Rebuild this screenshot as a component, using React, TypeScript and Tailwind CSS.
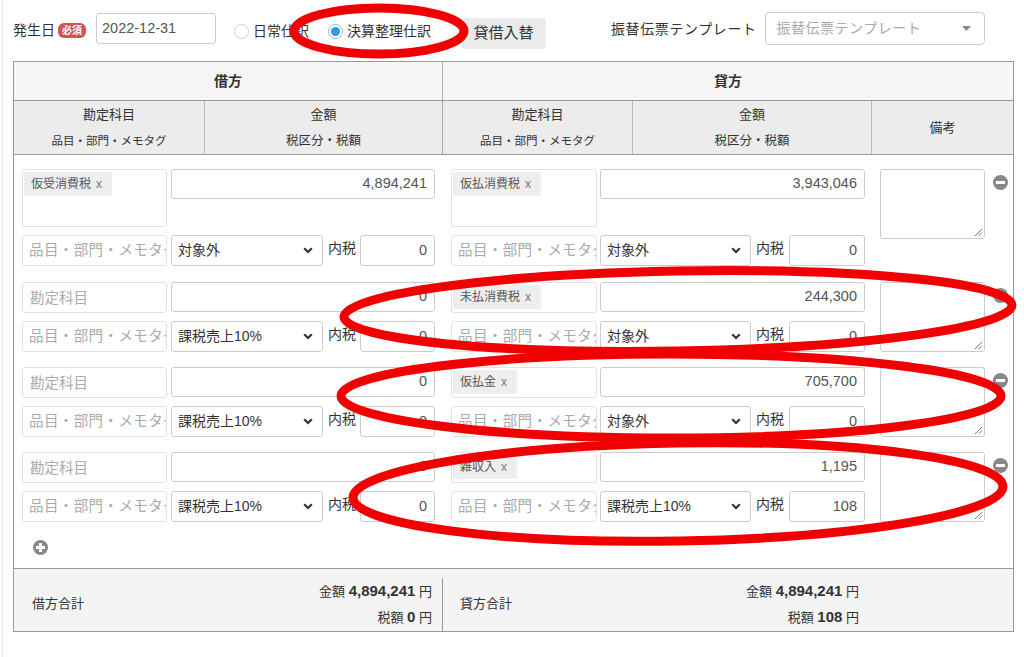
import React from "react";

type Side = {
  tag?: string;
  amount: string;
  tax: string;
  inner: string;
};

type Row = {
  debit: Side;
  credit: Side;
  tall?: boolean;
  gap: string;
};

const rows: Row[] = [
  {
    debit: { tag: "仮受消費税", amount: "4,894,241", tax: "対象外", inner: "0" },
    credit: { tag: "仮払消費税", amount: "3,943,046", tax: "対象外", inner: "0" },
    tall: true,
    gap: "",
  },
  {
    debit: { amount: "0", tax: "課税売上10%", inner: "0" },
    credit: { tag: "未払消費税", amount: "244,300", tax: "対象外", inner: "0" },
    gap: "mt-[16px]",
  },
  {
    debit: { amount: "0", tax: "課税売上10%", inner: "0" },
    credit: { tag: "仮払金", amount: "705,700", tax: "対象外", inner: "0" },
    gap: "mt-[15px]",
  },
  {
    debit: { amount: "0", tax: "課税売上10%", inner: "0" },
    credit: { tag: "雑収入", amount: "1,195", tax: "課税売上10%", inner: "108" },
    gap: "mt-[15px]",
  },
];

function Chevron() {
  return (
    <svg width="10" height="7" viewBox="0 0 10 7" className="shrink-0">
      <polyline points="1.2,1.2 5,5 8.8,1.2" fill="none" stroke="#333" strokeWidth="2.2" />
    </svg>
  );
}

function Tag({ label }: { label: string }) {
  return (
    <span className="inline-flex h-[24px] items-center rounded-[2px] bg-[#eeeeee] pl-[7px] pr-[10px] text-[12px] text-[#555]">
      {label}
      <span className="ml-[5px] text-[12px] text-[#777]">x</span>
    </span>
  );
}

function AccountBox({ tag, tall, w }: { tag?: string; tall?: boolean; w: string }) {
  return (
    <div
      className={`${w} ${tall ? "h-[58px]" : "h-[31px]"} shrink-0 rounded-[3px] border border-[#e2e2e2] bg-white pl-px pt-px`}
    >
      {tag ? (
        <Tag label={tag} />
      ) : (
        <div className="pl-[6px] pt-[4px] text-[14.5px] text-[#aaa]">勘定科目</div>
      )}
    </div>
  );
}

function SideBlock({ s, tall, credit }: { s: Side; tall?: boolean; credit?: boolean }) {
  return (
    <div className={credit ? "w-[414px] shrink-0" : "w-[413px] shrink-0"}>
      <div className={`flex items-start ${credit ? "gap-[3px]" : "gap-[4px]"}`}>
        <AccountBox tag={s.tag} tall={tall} w={credit ? "w-[146px]" : "w-[145px]"} />
        <div className="flex h-[30px] flex-1 items-center justify-end rounded-[3px] border border-[#cccccc] pr-[7px] text-[14.5px] text-[#555]">
          {s.amount}
        </div>
      </div>
      <div className="mt-[8px] flex items-start">
        <div
          className={`${credit ? "w-[146px]" : "w-[145px]"} h-[31px] shrink-0 overflow-hidden whitespace-nowrap rounded-[3px] border border-[#e2e2e2] pl-[6px] pt-[4px] text-[14.5px] tracking-[0.4px] text-[#aaa]`}
        >
          品目・部門・メモタグ
        </div>
        <div
          className={`${credit ? "ml-[3px] w-[151px]" : "ml-[4px] w-[152px]"} flex h-[31px] shrink-0 items-center justify-between rounded-[3px] border border-[#cccccc] pl-[6px] pr-[9px] text-[14px] text-[#333]`}
        >
          <span>{s.tax}</span>
          <Chevron />
        </div>
        <div className="ml-[5px] pt-[3px] text-[14px] text-[#333]">内税</div>
        <div
          className={`${credit ? "w-[76px]" : "w-[75px]"} ml-auto flex h-[31px] items-center justify-end rounded-[3px] border border-[#cccccc] pr-[7px] text-[14.5px] text-[#555]`}
        >
          {s.inner}
        </div>
      </div>
    </div>
  );
}

function Memo() {
  return (
    <div className="relative h-[70px] w-[105px] shrink-0 rounded-[3px] border border-[#cccccc]">
      <svg width="10" height="10" viewBox="0 0 10 10" className="absolute bottom-[1px] right-[1px]">
        <line x1="9" y1="2" x2="2" y2="9" stroke="#777" strokeWidth="1" />
        <line x1="9" y1="5.5" x2="5.5" y2="9" stroke="#777" strokeWidth="1" />
      </svg>
    </div>
  );
}

function RoundIcon({ plus }: { plus?: boolean }) {
  return (
    <svg width="15" height="15" viewBox="0 0 15 15" className="shrink-0">
      <circle cx="7.5" cy="7.5" r="7.5" fill="#888" />
      <rect x="3" y="6" width="9" height="3" fill="#fff" />
      {plus ? <rect x="6" y="3" width="3" height="9" fill="#fff" /> : null}
    </svg>
  );
}

function Radio({ checked }: { checked?: boolean }) {
  return checked ? (
    <span className="flex h-[15px] w-[15px] items-center justify-center rounded-full border border-[#8db9d8] bg-white">
      <span className="h-[9px] w-[9px] rounded-full bg-[#3a98d8]" />
    </span>
  ) : (
    <span className="h-[15px] w-[15px] rounded-full border border-[#cfcfcf] bg-white" />
  );
}

function HeadCell({ w, top, bottom, sub, border }: { w: string; top: string; bottom: string; sub: string; border: string }) {
  return (
    <div className={`flex ${w} flex-col items-center ${border} pt-[4px]`}>
      <span className="h-[26px] text-[13px] leading-[20px]">{top}</span>
      <span className={`${sub} leading-[20px]`}>{bottom}</span>
    </div>
  );
}

export default function App() {
  return (
    <div className="relative h-[657px] w-[1024px] overflow-hidden bg-white font-['Liberation_Sans','Noto_Sans_CJK_JP',sans-serif] text-[#333]">
      <div className="ml-[2px] h-full border-l border-[#e8e8e8] pl-[10px]">
        {/* toolbar */}
        <div className="flex h-[61px] items-start">
          <span className="mt-[20px] text-[14px] leading-[20px]">発生日</span>
          <span className="ml-[3px] mt-[23px] flex h-[15px] w-[28px] items-center justify-center rounded-[6px] bg-[#d4534f] text-[10px] font-bold leading-none text-white">
            必須
          </span>
          <div className="ml-[10px] mt-[13px] flex h-[31px] w-[120px] items-center rounded-[3px] border border-[#cccccc] pl-[5px] text-[14.5px] text-[#555]">
            2022-12-31
          </div>
          <div className="ml-[18px] mt-[21px] flex items-center">
            <Radio />
            <span className="ml-[4px] text-[14px] leading-[20px]">日常仕訳</span>
          </div>
          <div className="ml-[19px] mt-[21px] flex items-center">
            <Radio checked />
            <span className="ml-[4px] text-[14px] leading-[20px]">決算整理仕訳</span>
          </div>
          <div className="ml-[30px] mt-[18px] flex h-[31px] w-[85px] items-center justify-center rounded-[3px] bg-[#ebebeb] text-[15px]">
            貸借入替
          </div>
          <span className="ml-[65px] mt-[19px] text-[14px] leading-[20px] tracking-[0.6px]">振替伝票テンプレート</span>
          <div className="ml-[8px] mt-[12px] flex h-[33px] w-[220px] items-center justify-between rounded-[4px] border border-[#cccccc] pl-[11px] pr-[13px] text-[14px] tracking-[0.5px] text-[#aaa]">
            <span>振替伝票テンプレート</span>
            <svg width="9" height="5" viewBox="0 0 9 5">
              <polygon points="0,0 9,0 4.5,5" fill="#888" />
            </svg>
          </div>
        </div>

        {/* journal table */}
        <div className="w-[1001px] border border-[#999]">
          <div className="flex h-[38px] bg-[#f6f6f6] text-[14px] font-bold">
            <div className="flex w-[428px] items-center justify-center">借方</div>
            <div className="flex flex-1 items-center justify-center border-l border-[#aaa]">貸方</div>
          </div>
          <div className="flex h-[55px] border-y border-[#999] bg-[#ececec]">
            <HeadCell w="w-[190px]" top="勘定科目" bottom="品目・部門・メモタグ" sub="text-[11.5px]" border="" />
            <HeadCell w="w-[238px]" top="金額" bottom="税区分・税額" sub="text-[12.5px]" border="border-l border-[#bbb]" />
            <HeadCell w="w-[190px]" top="勘定科目" bottom="品目・部門・メモタグ" sub="text-[11.5px]" border="border-l border-[#aaa]" />
            <HeadCell w="w-[239px]" top="金額" bottom="税区分・税額" sub="text-[12.5px]" border="border-l border-[#bbb]" />
            <div className="flex flex-1 items-center justify-center border-l border-[#bbb] text-[13px]">備考</div>
          </div>

          <div className="h-[413px] bg-white pl-[8px] pt-[14px]">
            {rows.map((r, i) => (
              <div key={i} className={`flex items-start ${r.gap}`}>
                <SideBlock s={r.debit} tall={r.tall} />
                <div className="ml-[16px]">
                  <SideBlock s={r.credit} tall={r.tall} credit />
                </div>
                <div className="ml-[15px]">
                  <Memo />
                </div>
                <div className="ml-[8px] mt-[6px]">
                  <RoundIcon />
                </div>
              </div>
            ))}
            <div className="ml-[11px] mt-[18px]">
              <RoundIcon plus />
            </div>
          </div>

          <div className="flex h-[63px] border-t border-[#999] bg-[#f5f4f4] text-[13px]">
            <div className="flex w-[428px] items-center justify-between pl-[18px] pr-[10px] pt-[8px]">
              <span>借方合計</span>
              <div className="flex flex-col items-end">
                <span className="leading-[25px]">
                  金額 <b className="text-[15px]">4,894,241</b> 円
                </span>
                <span className="leading-[25px]">
                  税額 <b className="text-[15px]">0</b> 円
                </span>
              </div>
            </div>
            <div className="mt-[9px] flex w-[429px] items-center justify-between border-l border-[#999] pl-[17px] pr-[12px]">
              <span className="-mt-[1px]">貸方合計</span>
              <div className="-mt-[1px] flex flex-col items-end">
                <span className="leading-[25px]">
                  金額 <b className="text-[15px]">4,894,241</b> 円
                </span>
                <span className="leading-[25px]">
                  税額 <b className="text-[15px]">108</b> 円
                </span>
              </div>
            </div>
          </div>
        </div>
      </div>

      {/* hand-drawn red marks */}
      <svg
        className="pointer-events-none absolute left-0 top-0"
        width="1024"
        height="657"
        viewBox="0 0 1024 657"
      >
        <g fill="none" stroke="#f00000" strokeWidth="9">
          <ellipse cx="379" cy="31" rx="85" ry="23" />
          <ellipse cx="678" cy="311" rx="334" ry="40" transform="rotate(-1 678 311)" />
          <ellipse cx="671" cy="396" rx="330" ry="42" />
          <ellipse cx="678" cy="492" rx="325" ry="49" transform="rotate(-1 678 492)" />
        </g>
      </svg>
    </div>
  );
}
